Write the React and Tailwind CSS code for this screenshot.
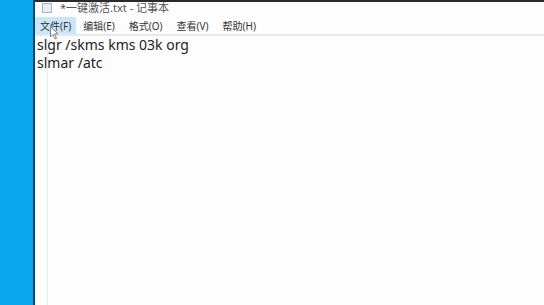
import React from 'react'

const menus = ['文件(F)', '编辑(E)', '格式(O)', '查看(V)', '帮助(H)']

const App = () => {
    return (
        <div className='flex w-[544px] h-[305px] overflow-hidden bg-[#fdfdfd]' style={{ fontFamily: '"Noto Sans", "Noto Sans CJK SC", sans-serif' }}>
            <div className='w-[33px] shrink-0 bg-[#0aa7ef]' />
            <div className='w-[2px] shrink-0 bg-[#1d3f55]' />
            <div className='relative flex flex-1 flex-col'>
                <div className='h-[2px] bg-[#2a2a2a]' />
                <div className='flex h-[15px] items-center gap-[8px] pl-[7px] text-[11px] text-[#555] leading-none'>
                    <div className='-mt-[3px] h-[10px] w-[10px] border border-[#9fb4c4] bg-[#e6eef4]' />
                    <span className='-mt-[4px]'>*一键激活.txt - 记事本</span>
                </div>
                <div className='flex h-[17px] items-center text-[10px] text-[#333] leading-none'>
                    <span className='flex h-full items-center bg-[#cce6f9] px-[5px]'>{menus[0]}</span>
                    {menus.slice(1).map((m) => (
                        <span key={m} className='px-[7px]'>{m}</span>
                    ))}
                </div>
                <div className='h-[2px] bg-[#e8e8e8]' />
                <div className='pl-[2px] text-[14px] leading-[18px] text-[#222]'>
                    <div>slgr /skms kms 03k org</div>
                    <div>slmar /atc</div>
                </div>
                <div className='absolute left-[12px] top-[40px] h-[265px] w-px bg-[#ececec]' />
                <svg className='absolute left-[15px] top-[26px]' width='10' height='14' viewBox='0 0 10 14'>
                    <path d='M0.5 0.5 L0.5 11 L3 8.5 L5 13 L6.5 12.3 L4.7 8 L8 8 Z' fill='#fff' stroke='#666' strokeWidth='0.8' />
                </svg>
            </div>
        </div>
    )
}

export default App
